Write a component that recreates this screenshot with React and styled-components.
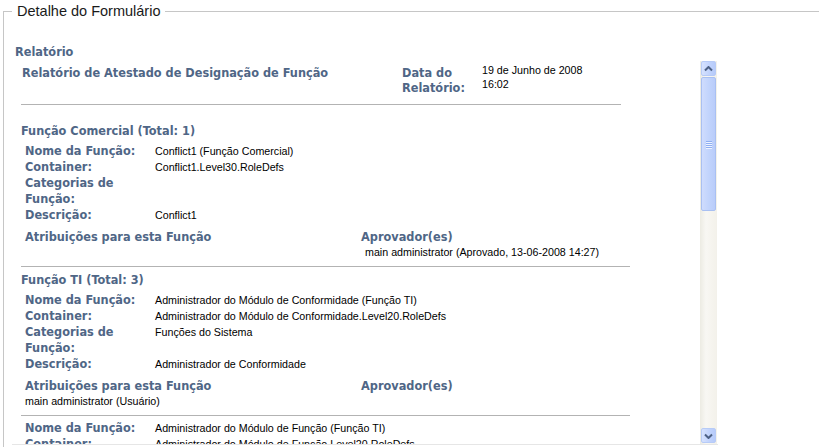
import React from "react";
import styled, { createGlobalStyle, css } from "styled-components";

const GlobalStyle = createGlobalStyle`
  html, body {
    margin: 0;
    padding: 0;
    background: #fff;
    overflow: hidden;
  }
  body {
    font-family: "Liberation Sans", Arial, sans-serif;
  }
`;

const labelFont = css`
  font-family: "DejaVu Sans Condensed", "DejaVu Sans", sans-serif;
  font-stretch: condensed;
  font-weight: bold;
  font-size: 12.6px;
  line-height: 16px;
  color: #4f6686;
`;

const valueFont = css`
  font-family: "Liberation Sans", Arial, sans-serif;
  font-size: 10.7px;
  color: #000;
`;

const Fieldset = styled.fieldset`
  margin: 3px 0 0 3px;
  padding: 0 0 0 8px;
  width: 860px;
  height: 520px;
  border: 1px solid #c6c6c6;
  box-sizing: border-box;
`;

const Legend = styled.legend`
  padding: 0 5px;
  font-family: "Liberation Sans", Arial, sans-serif;
  font-size: 14.5px;
  color: #1a1a1a;
`;

const Heading = styled.h2`
  ${labelFont}
  margin: 25px 0 1px 3px;
`;

const ScrollFrame = styled.div`
  display: flex;
  width: 706px;
  height: 383px;
  border-bottom: 1px solid #e6e6e6;
`;

const ScrollContent = styled.div`
  flex: 1;
  overflow: hidden;
  padding: 4px 0 0 9px;
`;

const ReportHeader = styled.div`
  display: grid;
  grid-template-columns: 380px 80px 1fr;
  align-items: start;
  margin-left: 1px;
`;

const ReportName = styled.div`
  ${labelFont}
`;

const DateLabel = styled.div`
  ${labelFont}
  line-height: 15px;
`;

const DateValue = styled.div`
  ${valueFont}
  line-height: 14px;
  margin-top: -2px;
`;

const Divider = styled.div`
  width: ${(p) => p.$width}px;
  margin-top: ${(p) => p.$top}px;
  border-top: 1px solid #b3b3b3;
`;

const SectionTitle = styled.h3`
  ${labelFont}
  margin: ${(p) => p.$top}px 0 0;
`;

const FieldList = styled.div`
  display: grid;
  grid-template-columns: 130px 1fr;
  margin: 4px 0 0 4px;
`;

const FieldLabel = styled.div`
  ${labelFont}
`;

const FieldValue = styled.div`
  ${valueFont}
  line-height: 16px;
`;

const Assignments = styled.div`
  display: grid;
  grid-template-columns: 336px 1fr;
  margin: 6px 0 0 4px;
`;

const AssignHeader = styled.div`
  ${labelFont}
`;

const AssignValue = styled.div`
  ${valueFont}
  line-height: 14px;
  padding-left: ${(p) => (p.$indent ? 4 : 0)}px;
  min-height: 14px;
`;

const ScrollBar = styled.div`
  width: 17px;
  margin-right: 1px;
  display: flex;
  flex-direction: column;
  background: linear-gradient(to right, #ecebe3, #f8f7f3 35%, #f3f1ea);
`;

const ScrollButton = styled.div`
  width: 15px;
  height: 15px;
  margin: ${(p) => (p.$down ? "auto 0 1px 1px" : "0 0 1px 1px")};
  box-sizing: border-box;
  border: 1px solid #b7cbf7;
  border-radius: 2px;
  background: linear-gradient(to right, #d6e2fe, #c0d2fc 60%, #b7cbfa);
  display: flex;
  align-items: center;
  justify-content: center;
`;

const Thumb = styled.div`
  width: 15px;
  height: 134px;
  margin-left: 1px;
  box-sizing: border-box;
  border: 1px solid #a9c0f2;
  border-radius: 2px;
  background: linear-gradient(to right, #cfdcfd, #c2d4fc 50%, #b9ccfa);
  display: flex;
  flex-direction: column;
  align-items: center;
  justify-content: center;
  gap: 1px;
`;

const GripLine = styled.span`
  display: block;
  width: 6px;
  height: 1px;
  background: #8eaef2;
  box-shadow: 0 1px 0 #eef3ff;
`;

const Arrow = ({ down }) => (
  <svg width="9" height="6" viewBox="0 0 9 6">
    <path
      d={down ? "M1 1.5 L4.5 5 L8 1.5" : "M1 4.5 L4.5 1 L8 4.5"}
      fill="none"
      stroke="#4d6185"
      strokeWidth="2"
    />
  </svg>
);

const sections = [
  {
    title: "Função Comercial (Total: 1)",
    top: 18,
    roles: [
      {
        name: "Conflict1 (Função Comercial)",
        container: "Conflict1.Level30.RoleDefs",
        categories: "",
        description: "Conflict1",
        assignments: "",
        approvers: "main administrator (Aprovado, 13-06-2008 14:27)",
      },
    ],
  },
  {
    title: "Função TI (Total: 3)",
    top: 5,
    roles: [
      {
        name: "Administrador do Módulo de Conformidade (Função TI)",
        container: "Administrador do Módulo de Conformidade.Level20.RoleDefs",
        categories: "Funções do Sistema",
        description: "Administrador de Conformidade",
        assignments: "main administrator (Usuário)",
        approvers: "",
      },
      {
        name: "Administrador do Módulo de Função (Função TI)",
        container: "Administrador do Módulo de Função.Level20.RoleDefs",
        categories: "Funções do Sistema",
        description: "Administrador de Funções",
        assignments: "main administrator (Usuário)",
        approvers: "",
      },
    ],
  },
];

function Role({ role }) {
  return (
    <>
      <FieldList>
        <FieldLabel>Nome da Função:</FieldLabel>
        <FieldValue>{role.name}</FieldValue>
        <FieldLabel>Container:</FieldLabel>
        <FieldValue>{role.container}</FieldValue>
        <FieldLabel>Categorias de Função:</FieldLabel>
        <FieldValue>{role.categories}</FieldValue>
        <FieldLabel>Descrição:</FieldLabel>
        <FieldValue>{role.description}</FieldValue>
      </FieldList>
      <Assignments>
        <AssignHeader>Atribuições para esta Função</AssignHeader>
        <AssignHeader>Aprovador(es)</AssignHeader>
        <AssignValue>{role.assignments}</AssignValue>
        <AssignValue $indent>{role.approvers}</AssignValue>
      </Assignments>
      <Divider $width={609} $top={7} />
    </>
  );
}

export default function App() {
  return (
    <>
      <GlobalStyle />
      <Fieldset>
        <Legend>Detalhe do Formulário</Legend>
        <Heading>Relatório</Heading>
        <ScrollFrame>
          <ScrollContent>
            <ReportHeader>
              <ReportName>Relatório de Atestado de Designação de Função</ReportName>
              <DateLabel>Data do Relatório:</DateLabel>
              <DateValue>
                19 de Junho de 2008
                <br />
                16:02
              </DateValue>
            </ReportHeader>
            <Divider $width={600} $top={9} />
            {sections.map((section) => (
              <section key={section.title}>
                <SectionTitle $top={section.top}>{section.title}</SectionTitle>
                {section.roles.map((role) => (
                  <Role key={role.name} role={role} />
                ))}
              </section>
            ))}
          </ScrollContent>
          <ScrollBar>
            <ScrollButton>
              <Arrow />
            </ScrollButton>
            <Thumb>
              <GripLine />
              <GripLine />
              <GripLine />
              <GripLine />
            </Thumb>
            <ScrollButton $down>
              <Arrow down />
            </ScrollButton>
          </ScrollBar>
        </ScrollFrame>
      </Fieldset>
    </>
  );
}
